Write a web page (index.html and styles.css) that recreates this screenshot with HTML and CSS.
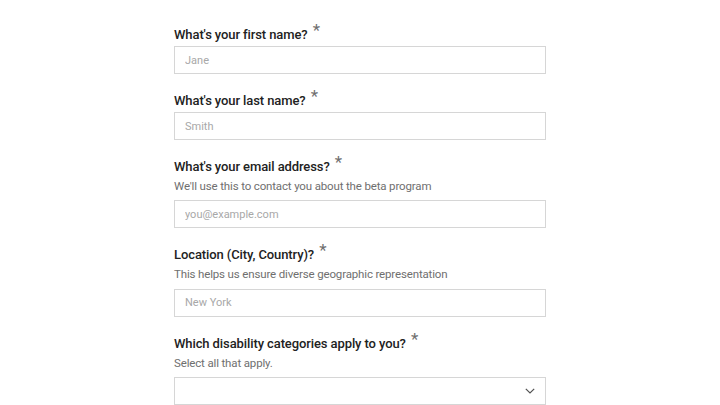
FILE: index.html
```html
<!DOCTYPE html>
<html lang="en">
<head>
<meta charset="utf-8">
<title>Beta signup</title>
<link rel="stylesheet" href="styles.css">
</head>
<body>
<form class="form">
  <div class="field">
    <label class="label">What's your first name? <span class="req">*</span></label>
    <input class="input" type="text" placeholder="Jane">
  </div>
  <div class="field">
    <label class="label">What's your last name? <span class="req">*</span></label>
    <input class="input" type="text" placeholder="Smith">
  </div>
  <div class="field">
    <label class="label">What's your email address? <span class="req">*</span></label>
    <p class="help">We'll use this to contact you about the beta program</p>
    <input class="input" type="text" placeholder="you@example.com">
  </div>
  <div class="field">
    <label class="label">Location (City, Country)? <span class="req">*</span></label>
    <p class="help">This helps us ensure diverse geographic representation</p>
    <input class="input" type="text" placeholder="New York">
  </div>
  <div class="field">
    <label class="label">Which disability categories apply to you? <span class="req">*</span></label>
    <p class="help">Select all that apply.</p>
    <div class="select">
      <svg class="chev" width="10" height="6" viewBox="0 0 10 6"><path d="M0.8 0.8 L5 5 L9.2 0.8" fill="none" stroke="#525252" stroke-width="1.2"/></svg>
    </div>
  </div>
</form>
</body>
</html>
```

FILE: styles.css
```css
html, body {
  margin: 0;
  padding: 0;
  background: #ffffff;
}
body {
  font-family: Roboto, "Liberation Sans", sans-serif;
  color: #262626;
}
.form {
  width: 372px;
  margin: 0 auto;
  padding-top: 23px;
  display: flex;
  flex-direction: column;
  gap: 15px;
}
.field {
  display: flex;
  flex-direction: column;
}
.label {
  display: block;
  font-size: 13px;
  font-weight: 500;
  letter-spacing: -0.1px;
  line-height: 20px;
  height: 20px;
  margin-bottom: 3px;
  color: #222222;
}
.req {
  color: #6f6f6f;
  font-weight: 400;
  font-size: 17px;
  letter-spacing: 0;
  position: relative;
  top: -3px;
  margin-left: 2px;
}
.help {
  margin: 0 0 5.4px 0;
  font-size: 11.5px;
  letter-spacing: -0.15px;
  line-height: 17px;
  height: 17px;
  color: #6f6f6f;
}
.input {
  box-sizing: border-box;
  width: 372px;
  height: 28px;
  margin: 0;
  border: 1px solid #d6d6d6;
  border-radius: 0;
  padding: 0 10px;
  font-family: inherit;
  font-size: 11px;
  color: #262626;
  background: #ffffff;
  outline: none;
}
.input::placeholder {
  color: #a8a8a8;
}
.select {
  box-sizing: border-box;
  width: 372px;
  height: 28px;
  border: 1px solid #d6d6d6;
  display: flex;
  align-items: center;
  justify-content: flex-end;
  padding-right: 10px;
}
.chev {
  display: block;
}
```
